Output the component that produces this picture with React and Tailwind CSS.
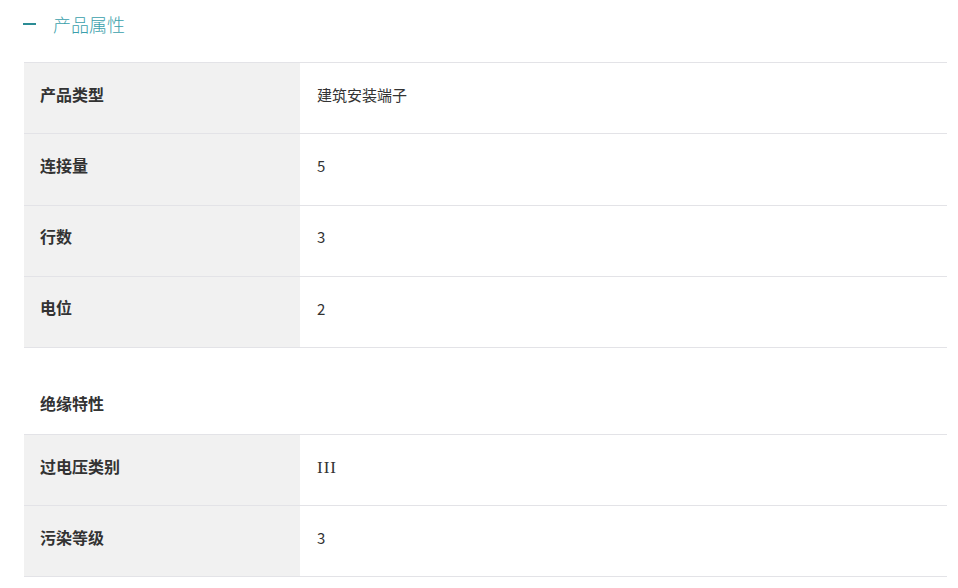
import React from "react";

const rows1 = [
  ["产品类型", "建筑安装端子"],
  ["连接量", "5"],
  ["行数", "3"],
  ["电位", "2"],
];
const rows2 = [
  ["过电压类别", "III", true],
  ["污染等级", "3"],
];

const cjk = { fontFamily: '"Noto Sans CJK SC", "Noto Sans", sans-serif' };

function Row({ label, value, serif, tall }) {
  return (
    <div className={`flex border-b border-[#e3e3e7] ${tall ? "h-[71.25px]" : "h-[71px]"}`}>
      <div className="w-[276px] shrink-0 bg-[#f1f1f1] flex items-center pl-4 pb-[9px] text-[16px] font-bold text-[#333]">
        {label}
      </div>
      <div
        className={`flex-1 flex items-center pl-[17px] text-[#333] ${serif ? "text-[17px] pb-[5px]" : "text-[15px] pb-[6px]"}`}
        style={serif ? { fontFamily: '"Liberation Serif", serif', letterSpacing: "1px" } : undefined}
      >
        {value}
      </div>
    </div>
  );
}

export default function App() {
  return (
    <div className="w-[958px] h-[588px] bg-white overflow-hidden" style={cjk}>
      <div className="h-[48px] flex items-center pl-[23px]">
        <div className="w-[13px] h-[2.5px] bg-[#2b8c95]" />
        <div className="ml-[17px] text-[18px] text-[#3a9fab] font-light leading-none">产品属性</div>
      </div>
      <div className="ml-[24px] mr-[11px] mt-[14px] border-t border-[#e3e3e7]">
        {rows1.map(([l, v]) => (
          <Row key={l} label={l} value={v} tall />
        ))}
        <div className="h-[87px] border-b border-[#e3e3e7] flex items-center pt-[23px] pl-4 text-[16px] font-bold text-[#333]">
          绝缘特性
        </div>
        {rows2.map(([l, v, s]) => (
          <Row key={l} label={l} value={v} serif={s} />
        ))}
      </div>
    </div>
  );
}
